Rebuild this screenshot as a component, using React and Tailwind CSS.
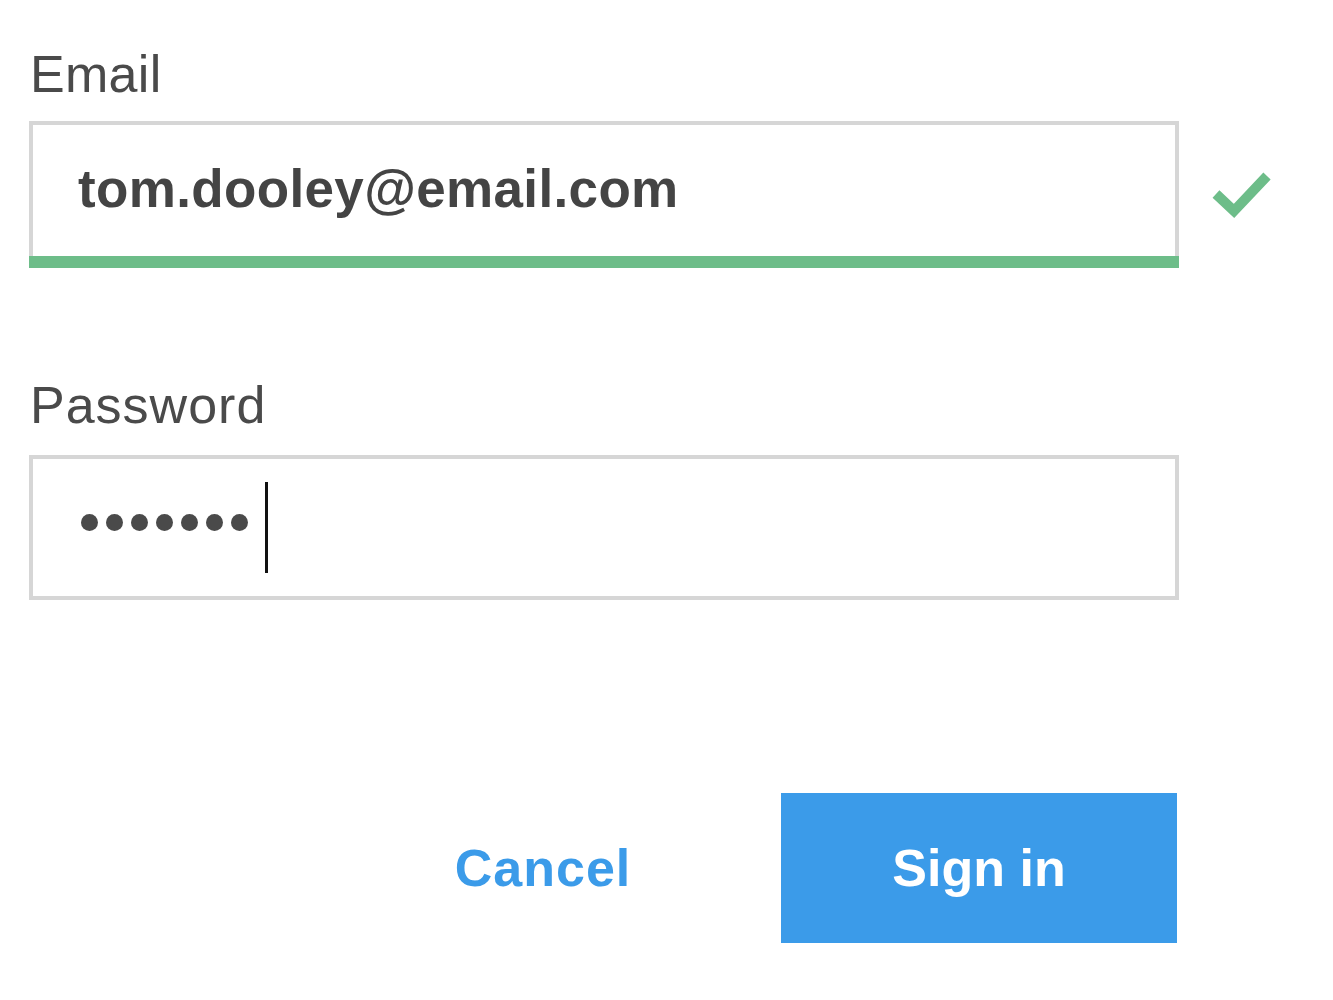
import React from "react";

export default function App() {
  const dots = [0, 1, 2, 3, 4, 5, 6];
  return (
    <div
      className="w-[1333px] h-[1000px] bg-white pt-[44px] pl-[29px]"
      style={{ fontFamily: '"Liberation Sans", Arial, sans-serif' }}
    >
      {/* Email */}
      <label className="block text-[52px] leading-[60px] text-[#4a4a4a] pl-[1px] tracking-[0.3px]">Email</label>
      <div className="mt-[17px] flex items-start">
        <div className="w-[1150px]">
          <div className="h-[135px] border-4 border-b-0 border-[#d6d6d6] pl-[45px] pt-[34px]">
            <div className="text-[53px] leading-[60px] font-bold text-[#444444] tracking-[0.35px]">tom.dooley@email.com</div>
          </div>
          <div className="h-[12px] bg-[#6dbd89]"></div>
        </div>
        <svg
          className="ml-[29px] mt-[45px]"
          width="70"
          height="60"
          viewBox="0 0 70 60"
          fill="none"
        >
          <polyline
            points="8,28 26,45 59,10"
            stroke="#6dbd89"
            strokeWidth="10"
            strokeLinecap="butt"
            strokeLinejoin="miter"
            fill="none"
          />
        </svg>
      </div>

      {/* Password */}
      <label className="mt-[107px] block text-[52px] leading-[60px] text-[#4a4a4a] pl-[1px] tracking-[1px]">Password</label>
      <div className="mt-[20px] w-[1150px] h-[145px] border-4 border-[#d6d6d6] pl-[48px] flex items-start">
        <div className="mt-[55px] flex gap-[8px]" aria-label="password">
          {dots.map((d) => (
            <div key={d} className="w-[17px] h-[17px] rounded-full bg-[#4a4a4a]"></div>
          ))}
        </div>
        <div className="ml-[17px] mt-[23px] w-[3px] h-[91px] bg-[#111111]"></div>
      </div>

      {/* Buttons */}
      <div className="mt-[193px] w-[1148px] flex justify-end gap-[40px]">
        <button className="w-[396px] h-[150px] flex items-center justify-center text-[52px] leading-[60px] font-bold text-[#3b9be9] bg-white tracking-[1px]">
          Cancel
        </button>
        <button className="w-[396px] h-[150px] flex items-center justify-center text-[52px] leading-[60px] font-bold text-white bg-[#3b9be9]">
          Sign in
        </button>
      </div>
    </div>
  );
}
